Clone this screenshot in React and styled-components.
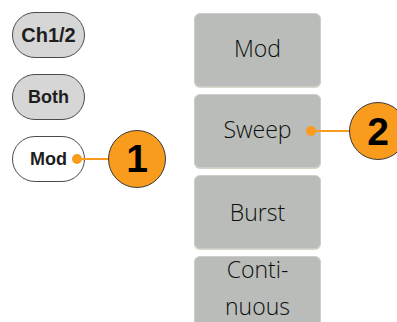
import React from "react";
import styled, { createGlobalStyle } from "styled-components";

const GlobalStyle = createGlobalStyle`
	html, body {
		margin: 0;
		padding: 0;
		background: #ffffff;
		overflow: hidden;
	}
`;

const ORANGE = "#f99b1c";

const Page = styled.div`
	display: flex;
	align-items: flex-start;
	width: 397px;
	height: 322px;
	overflow: hidden;
	padding-left: 12px;
	box-sizing: border-box;
`;

const LeftCol = styled.div`
	display: flex;
	flex-direction: column;
	gap: 16px;
	padding-top: 12px;
	width: 73px;
`;

const Pill = styled.div`
	position: relative;
	height: 46px;
	box-sizing: border-box;
	border: 1.5px solid #4a4a4a;
	border-radius: 23px;
	background: ${({ active }) => (active ? "#ffffff" : "#d6d6d6")};
	display: flex;
	align-items: center;
	justify-content: center;
	font-family: "Liberation Sans", Arial, sans-serif;
	font-weight: bold;
	font-size: ${({ big }) => (big ? 20 : 18)}px;
	color: #1e1e1e;
`;

const RightCol = styled.div`
	display: flex;
	flex-direction: column;
	gap: 7px;
	padding-top: 13px;
	margin-left: 109px;
	width: 127px;
`;

const SoftKey = styled.div`
	position: relative;
	height: 74px;
	box-sizing: border-box;
	border: 1px solid #cbcecb;
	border-radius: 6px;
	background: #b9bcb9;
	box-shadow: 0 1px 0 #d8d4c8;
	display: flex;
	align-items: center;
	justify-content: center;
	text-align: center;
	font-family: "Open Sans", "Noto Sans", sans-serif;
	font-weight: 300;
	font-size: 23px;
	line-height: 37px;
	color: #0e0e0e;
	padding-bottom: ${({ lift }) => lift || 0}px;
`;

// callouts sit over the buttons, so these are positioned
const Callout = styled.div`
	position: absolute;
	top: 50%;
	left: ${({ x }) => x}px;
	transform: translateY(-50%);
	display: flex;
	align-items: center;
	z-index: 2;
`;

const Dot = styled.span`
	width: 10px;
	height: 10px;
	border-radius: 50%;
	background: ${ORANGE};
	flex: none;
`;

const Lead = styled.span`
	width: ${({ len }) => len}px;
	height: 2px;
	background: ${ORANGE};
	flex: none;
`;

const Badge = styled.span`
	width: 58px;
	height: 58px;
	box-sizing: border-box;
	border-radius: 50%;
	border: 1px solid #3a3a3a;
	background: ${ORANGE};
	display: flex;
	align-items: center;
	justify-content: center;
	flex: none;
	font-family: "Liberation Sans", Arial, sans-serif;
	font-weight: bold;
	font-size: 39px;
	color: #000;
`;

const Marker = ({ x, len, n }) => (
	<Callout x={x}>
		<Dot />
		<Lead len={len} />
		<Badge>{n}</Badge>
	</Callout>
);

const App = () => {
	return (
		<>
			<GlobalStyle />
			<Page>
				<LeftCol>
					<Pill big>Ch1/2</Pill>
					<Pill>Both</Pill>
					<Pill active>
						Mod
						<Marker x={59} len={26} n="1" />
					</Pill>
				</LeftCol>
				<RightCol>
					<SoftKey lift={4}>Mod</SoftKey>
					<SoftKey lift={4}>
						Sweep
						<Marker x={111} len={33} n="2" />
					</SoftKey>
					<SoftKey>Burst</SoftKey>
					<SoftKey lift={10}>
						Conti-
						<br />
						nuous
					</SoftKey>
				</RightCol>
			</Page>
		</>
	);
};

export default App;
